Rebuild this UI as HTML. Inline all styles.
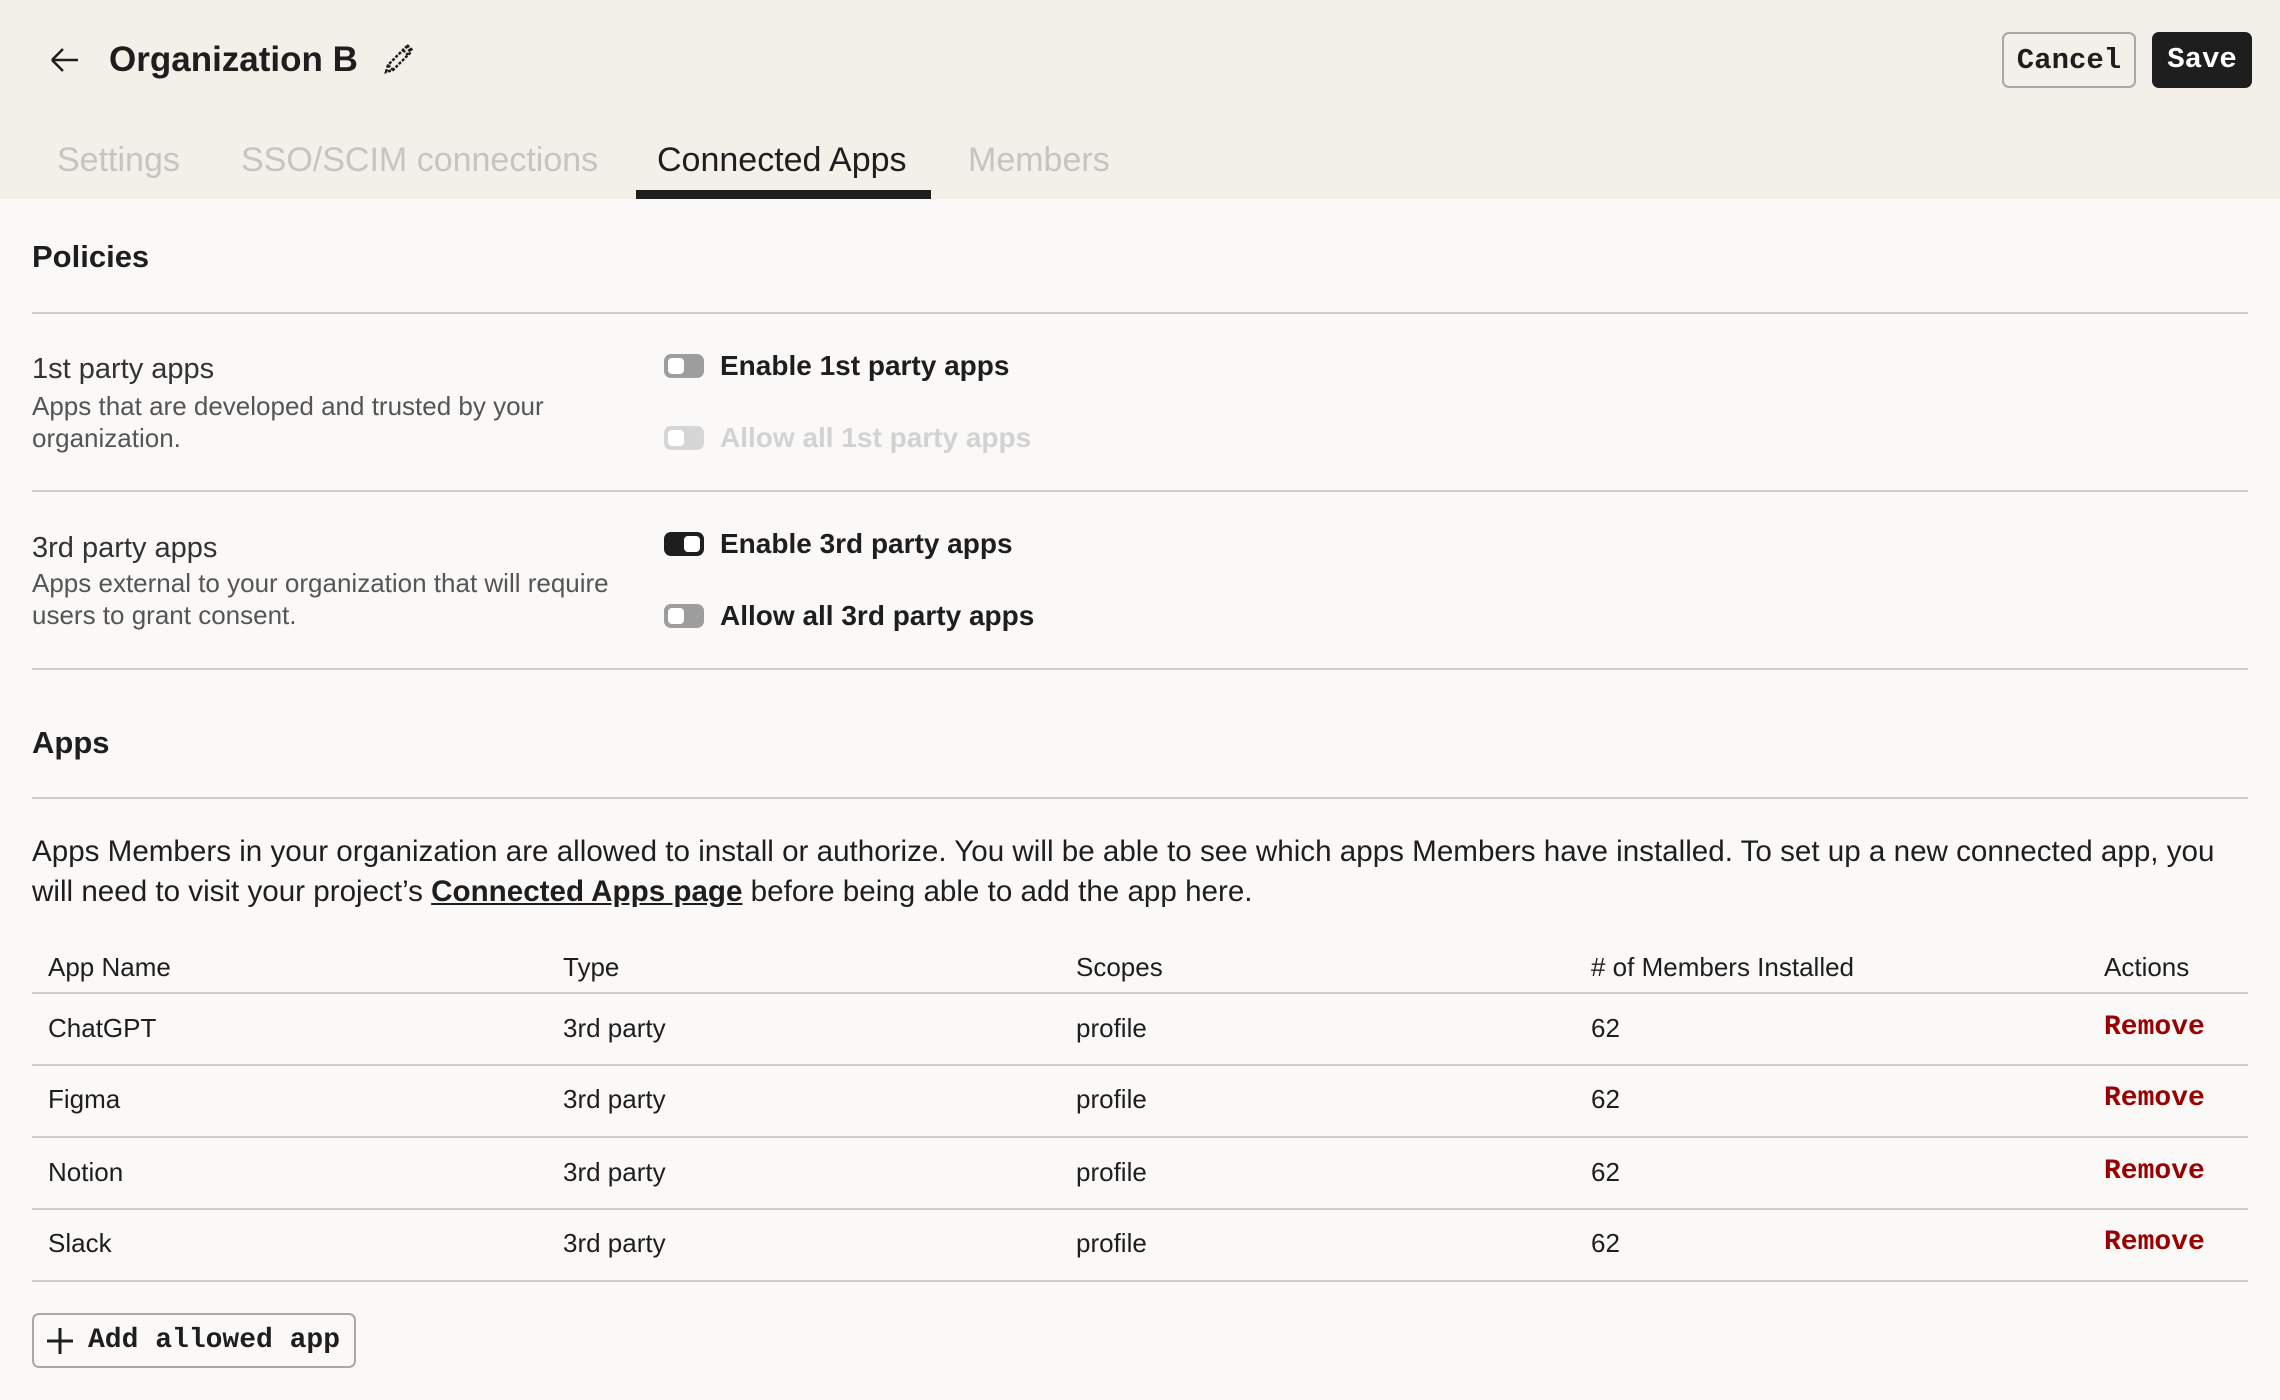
<!DOCTYPE html>
<html><head><meta charset="utf-8"><style>
*{margin:0;padding:0;box-sizing:border-box}
body{width:2280px;height:1400px;background:#faf9f7;font-family:"Liberation Sans",sans-serif;color:#1e1e1e;position:relative;overflow:hidden}
.a{position:absolute;white-space:nowrap}
.hdr{position:absolute;left:0;top:0;width:2280px;height:199px;background:#f3efe9}
.hr{position:absolute;left:32px;width:2216px;height:2px;background:#d0cecb}
.mono{font-family:"Liberation Mono",monospace}
.tg{position:absolute;left:664px;width:40px;height:24px;border-radius:7px;background:#9d9d9d}
.tg::after{content:"";position:absolute;left:4px;top:4px;width:16px;height:16px;border-radius:4px;background:#fff}
.tg.on{background:#1e1e1e}.tg.on::after{left:auto;right:4px}
.tg.dis{background:#d6d6d6}
.lbl{font-size:28px;font-weight:bold;left:720px;line-height:40px}
.sub{font-size:26px;color:#555;line-height:32px}
.th{font-size:26px;line-height:34px}
.rm{font-family:"Liberation Mono",monospace;font-weight:bold;color:#9b0000;font-size:28px;left:2104px;line-height:34px}
.tab{font-size:34px;line-height:40px;top:140px;color:#c6c4c1}
</style></head><body>
<div class="hdr"></div>
<svg class="a" style="left:48px;top:44px" width="34" height="32" viewBox="0 0 34 32"><path d="M4 16H30M4 16L15 5M4 16L15 27" stroke="#1e1e1e" stroke-width="2.5" fill="none"/></svg>
<div class="a" style="left:109px;top:38px;font-size:35px;font-weight:bold;line-height:44px">Organization B</div>
<svg class="a" style="left:380px;top:42px" width="36" height="36" viewBox="0 0 36 36"><path d="M6 30L8 23L26 5L31 10L13 28Z M8 23L13 28 M23 8L28 13 M27 3L33 9" stroke="#1e1e1e" stroke-width="2.5" fill="none" stroke-dasharray="3 1.5"/></svg>
<div class="a mono" style="left:2002px;top:32px;width:134px;height:56px;border:2px solid #a8a8a8;border-radius:7px;font-size:29px;font-weight:bold;line-height:54px;text-align:center">Cancel</div>
<div class="a mono" style="left:2152px;top:32px;width:100px;height:56px;background:#1e1e1e;color:#fff;border-radius:7px;font-size:29px;font-weight:bold;line-height:56px;text-align:center">Save</div>
<div class="a tab" style="left:57px">Settings</div>
<div class="a tab" style="left:241px">SSO/SCIM connections</div>
<div class="a tab" style="left:657px;color:#1e1e1e">Connected Apps</div>
<div class="a tab" style="left:968px">Members</div>
<div class="a" style="left:636px;top:190px;width:295px;height:9px;background:#1e1e1e"></div>

<div class="a" style="left:32px;top:238px;font-size:31px;font-weight:bold;line-height:38px">Policies</div>
<div class="hr" style="top:312px"></div>
<div class="a" style="left:32px;top:352px;font-size:29px;color:#333;line-height:34px">1st party apps</div>
<div class="a sub" style="left:32px;top:390px">Apps that are developed and trusted by your</div>
<div class="a sub" style="left:32px;top:422px">organization.</div>
<div class="tg" style="top:354px"></div>
<div class="a lbl" style="top:346px">Enable 1st party apps</div>
<div class="tg dis" style="top:426px"></div>
<div class="a lbl" style="top:418px;color:#d2d2d2">Allow all 1st party apps</div>
<div class="hr" style="top:490px"></div>
<div class="a" style="left:32px;top:531px;font-size:29px;color:#333;line-height:34px">3rd party apps</div>
<div class="a sub" style="left:32px;top:567px">Apps external to your organization that will require</div>
<div class="a sub" style="left:32px;top:599px">users to grant consent.</div>
<div class="tg on" style="top:532px"></div>
<div class="a lbl" style="top:524px">Enable 3rd party apps</div>
<div class="tg" style="top:604px"></div>
<div class="a lbl" style="top:596px">Allow all 3rd party apps</div>
<div class="hr" style="top:668px"></div>

<div class="a" style="left:32px;top:724px;font-size:31px;font-weight:bold;line-height:38px">Apps</div>
<div class="hr" style="top:797px"></div>
<div class="a" style="left:32px;top:832px;font-size:29.6px;line-height:40px">Apps Members in your organization are allowed to install or authorize. You will be able to see which apps Members have installed. To set up a new connected app, you</div>
<div class="a" style="left:32px;top:872px;font-size:29.6px;line-height:40px">will need to visit your project’s <b style="text-decoration:underline">Connected Apps page</b> before being able to add the app here.</div>

<div class="a th" style="left:48px;top:950px">App Name</div>
<div class="a th" style="left:563px;top:950px">Type</div>
<div class="a th" style="left:1076px;top:950px">Scopes</div>
<div class="a th" style="left:1591px;top:950px"># of Members Installed</div>
<div class="a th" style="left:2104px;top:950px">Actions</div>
<div class="hr" style="top:992px"></div>

<div class="a th" style="left:48px;top:1011px">ChatGPT</div><div class="a th" style="left:563px;top:1011px">3rd party</div><div class="a th" style="left:1076px;top:1011px">profile</div><div class="a th" style="left:1591px;top:1011px">62</div><div class="a rm" style="top:1011px">Remove</div>
<div class="hr" style="top:1064px"></div>
<div class="a th" style="left:48px;top:1082px">Figma</div><div class="a th" style="left:563px;top:1082px">3rd party</div><div class="a th" style="left:1076px;top:1082px">profile</div><div class="a th" style="left:1591px;top:1082px">62</div><div class="a rm" style="top:1082px">Remove</div>
<div class="hr" style="top:1136px"></div>
<div class="a th" style="left:48px;top:1155px">Notion</div><div class="a th" style="left:563px;top:1155px">3rd party</div><div class="a th" style="left:1076px;top:1155px">profile</div><div class="a th" style="left:1591px;top:1155px">62</div><div class="a rm" style="top:1155px">Remove</div>
<div class="hr" style="top:1208px"></div>
<div class="a th" style="left:48px;top:1226px">Slack</div><div class="a th" style="left:563px;top:1226px">3rd party</div><div class="a th" style="left:1076px;top:1226px">profile</div><div class="a th" style="left:1591px;top:1226px">62</div><div class="a rm" style="top:1226px">Remove</div>
<div class="hr" style="top:1280px"></div>

<div class="a" style="left:32px;top:1313px;width:324px;height:55px;border:2px solid #a8a8a8;border-radius:7px"></div>
<svg class="a" style="left:46px;top:1327px" width="28" height="28" viewBox="0 0 28 28"><path d="M14 1V27M1 14H27" stroke="#1e1e1e" stroke-width="3"/></svg>
<div class="a mono" style="left:88px;top:1322px;font-size:28px;font-weight:bold;line-height:38px">Add allowed app</div>
</body></html>
